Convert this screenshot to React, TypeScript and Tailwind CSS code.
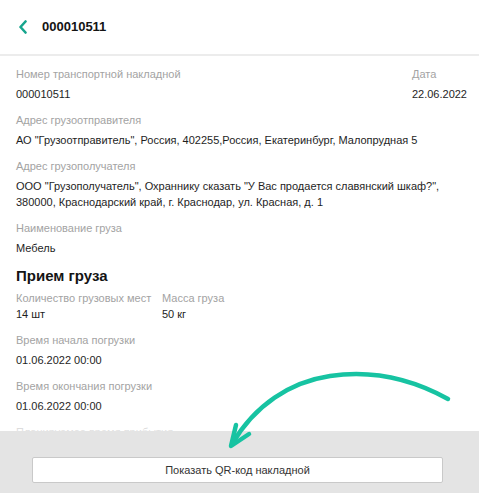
import { ReactNode } from "react";

function Field({ label, children, tight }: { label: string; children: ReactNode; tight?: boolean }) {
  return (
    <div className="flex flex-col">
      <span className="text-[11px] leading-[16px] text-[#a3a3a3]">{label}</span>
      <span className={`text-[11px] leading-[16px] text-[#1e1e1e] ${tight ? "mt-0" : "mt-[4px]"}`}>{children}</span>
    </div>
  );
}

export default function App() {
  return (
    <div
      className="relative h-[493px] w-[479px] overflow-hidden bg-white"
      style={{ fontFamily: '"Liberation Sans", Arial, sans-serif' }}
    >
      {/* Header */}
      <div className="flex h-[56px] items-center gap-[14px] border-b-2 border-[#ececec] pl-[18px]">
        <svg width="10" height="14" viewBox="0 0 10 14" fill="none">
          <path d="M7.5 1.5 L2.5 7 L7.5 12.5" stroke="#16a58d" strokeWidth="2.6" strokeLinecap="round" strokeLinejoin="round" />
        </svg>
        <span className="text-[13px] font-bold text-[#141414]">000010511</span>
      </div>

      {/* Content */}
      <div className="flex flex-col gap-[10px] pl-[16px] pr-[12px] pt-[10px]">
        <div className="flex justify-between">
          <Field label="Номер транспортной накладной">000010511</Field>
          <div className="flex flex-col items-end">
            <span className="w-full text-[11px] leading-[16px] text-[#a3a3a3]">Дата</span>
            <span className="mt-[4px] text-[11px] leading-[16px] text-[#1e1e1e]">22.06.2022</span>
          </div>
        </div>
        <Field label="Адрес грузоотправителя">
          АО "Грузоотправитель", Россия, 402255,Россия, Екатеринбург, Малопрудная 5
        </Field>
        <Field label="Адрес грузополучателя">
          ООО "Грузополучатель", Охраннику сказать "У Вас продается славянский шкаф?",
          <br />
          380000, Краснодарский край, г. Краснодар, ул. Красная, д. 1
        </Field>
        <Field label="Наименование груза">Мебель</Field>

        <div className="-mb-[6px] text-[15px] font-bold leading-[20px] text-[#141414]">Прием груза</div>
        <div className="flex gap-[4px]">
          <div className="w-[142px]">
            <Field label="Количество грузовых мест" tight>14 шт</Field>
          </div>
          <Field label="Масса груза" tight>50 кг</Field>
        </div>
        <Field label="Время начала погрузки">01.06.2022 00:00</Field>
        <Field label="Время окончания погрузки">01.06.2022 00:00</Field>
        <Field label="Планируемое время прибытия">01.06.2022 00:00</Field>
      </div>

      {/* Fade above footer */}
      <div className="absolute bottom-[62px] left-0 right-0 h-[24px] bg-gradient-to-b from-white/0 to-white/70" />

      {/* Footer */}
      <div className="absolute bottom-0 left-0 right-0 flex h-[62px] items-start bg-[#e4e4e4] pl-[32px] pt-[26px]">
        <button className="h-[26px] w-[411px] rounded-[2px] border border-[#c9c9c9] bg-white text-[11px] text-[#333]">
          Показать QR-код накладной
        </button>
      </div>

      {/* Annotation arrow */}
      <svg className="pointer-events-none absolute left-0 top-0" width="479" height="493" viewBox="0 0 479 493" fill="none">
        <path
          d="M448 399 C 410 378, 370 370, 330 376 C 290 382, 255 405, 232 444"
          stroke="#17c3a2"
          strokeWidth="4.5"
          strokeLinecap="round"
        />
        <path
          d="M236 425 L231 446 L249 434"
          stroke="#17c3a2"
          strokeWidth="4.5"
          strokeLinecap="round"
          strokeLinejoin="round"
        />
      </svg>
    </div>
  );
}
